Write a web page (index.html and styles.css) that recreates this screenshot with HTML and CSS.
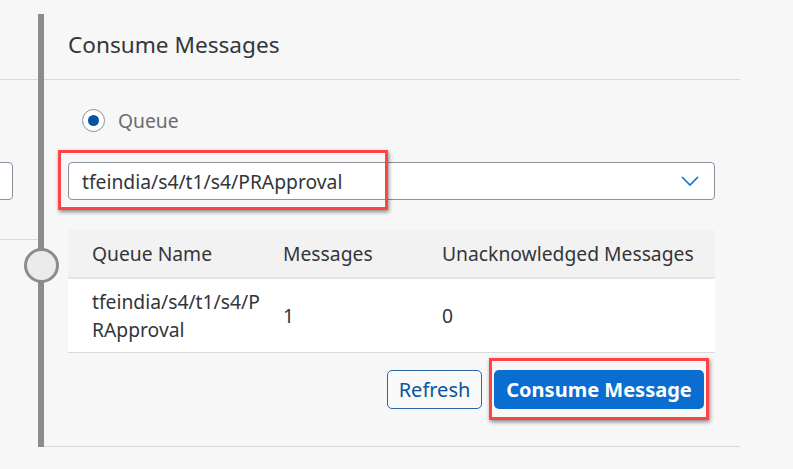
FILE: index.html
```html
<!DOCTYPE html>
<html lang="en">
<head>
<meta charset="utf-8">
<title>Consume Messages</title>
<link rel="stylesheet" href="styles.css">
</head>
<body>
<div class="page">
  <aside class="side">
    <div class="side-head"></div>
    <div class="side-body">
      <div class="side-input"></div>
    </div>
  </aside>
  <div class="rail"><span class="rail-node"></span></div>
  <section class="panel">
    <h2 class="panel-title">Consume Messages</h2>
    <div class="panel-body">
      <label class="radio">
        <span class="radio-ring"><span class="radio-dot"></span></span>
        <span class="radio-label">Queue</span>
      </label>
      <div class="select">
        <span class="select-value">tfeindia/s4/t1/s4/PRApproval</span>
        <svg class="chevron" width="18" height="10" viewBox="0 0 18 10"><path d="M1 1 L9 9 L17 1" fill="none" stroke="#0a6ed1" stroke-width="1.6"/></svg>
        <span class="mark mark-select"></span>
      </div>
      <div class="table">
        <div class="row row-head">
          <div class="cell c1">Queue Name</div>
          <div class="cell">Messages</div>
          <div class="cell">Unacknowledged Messages</div>
        </div>
        <div class="row row-body">
          <div class="cell c1"><span class="wrap">tfeindia/s4/t1/s4/PRApproval</span></div>
          <div class="cell">1</div>
          <div class="cell">0</div>
        </div>
      </div>
      <div class="actions">
        <button class="btn btn-ghost">Refresh</button>
        <button class="btn btn-primary">Consume Message<span class="mark mark-btn"></span></button>
      </div>
    </div>
  </section>
</div>
</body>
</html>
```
FILE: styles.css
```css
* { box-sizing: border-box; }
html, body { margin: 0; padding: 0; }
body {
  background: #f7f7f7;
  font-family: "Noto Sans", "Open Sans", sans-serif;
  color: #32363a;
}
.page {
  display: flex;
  height: 469px;
}
.side {
  width: 38px;
  flex: none;
}
.side-head {
  height: 80px;
  border-bottom: 1px solid #d9d9d9;
}
.side-body {
  height: 160px;
  padding-top: 82px;
  border-bottom: 1px solid #d9d9d9;
}
.side-input {
  margin-left: -10px;
  width: 23px;
  height: 38px;
  background: #fff;
  border: 1px solid #89919a;
  border-radius: 4px;
}
.rail {
  flex: none;
  width: 6px;
  margin-top: 14px;
  height: 433px;
  background: #8c8c8c;
  position: relative;
}
.rail-node {
  position: absolute;
  left: -14.5px;
  top: 234px;
  width: 35px;
  height: 35px;
  border: 3px solid #8c8c8c;
  background: #ebebeb;
  border-radius: 50%;
}
.panel {
  flex: none;
  width: 696px;
  height: 447px;
  border-bottom: 1px solid #d9d9d9;
}
.panel-title {
  margin: 0;
  height: 80px;
  padding: 29px 0 0 24px;
  font-size: 22.6px;
  line-height: 32px;
  font-weight: 400;
  color: #32363a;
  border-bottom: 1px solid #d9d9d9;
}
.panel-body {
  padding: 0 25px 0 24px;
}
.radio {
  display: flex;
  align-items: center;
  gap: 13px;
  margin: 29px 0 0 14px;
  height: 23px;
}
.radio-ring {
  width: 23px;
  height: 23px;
  border: 1px solid #89919a;
  border-radius: 50%;
  background: #fff;
  display: flex;
  align-items: center;
  justify-content: center;
}
.radio-dot {
  width: 11px;
  height: 11px;
  border-radius: 50%;
  background: #0854a0;
}
.radio-label {
  font-size: 19.3px;
  color: #6a6d70;
}
.select {
  position: relative;
  margin-top: 30px;
  height: 38px;
  display: flex;
  align-items: center;
  padding: 0 15px 0 13px;
  background: #fff;
  border: 1px solid #89919a;
  border-radius: 4px;
  font-size: 19.3px;
  color: #32363a;
}
.chevron { margin-left: auto; }
.mark {
  position: absolute;
  border: 3px solid #ff4242;
  box-shadow: 1px 2px 4px rgba(0, 0, 0, 0.45);
  pointer-events: none;
}
.mark-select {
  left: -11px;
  top: -13px;
  width: 330px;
  height: 60px;
}
.table {
  margin-top: 30px;
  font-size: 19.3px;
  color: #32363a;
}
.row {
  display: grid;
  grid-template-columns: 191px 159px 1fr;
  align-items: center;
}
.row-head {
  height: 49px;
  background: #f2f2f2;
  border-bottom: 2px solid #e4e4e4;
}
.row-body {
  height: 74px;
  background: #fff;
  border-bottom: 1px solid #d9d9d9;
  line-height: 28px;
}
.cell { padding-left: 24px; }
.wrap {
  display: block;
  width: 174px;
  word-break: break-all;
}
.actions {
  display: flex;
  justify-content: flex-end;
  gap: 12px;
  margin: 17px 11px 0 0;
}
.btn {
  position: relative;
  height: 39px;
  border-radius: 5px;
  font-family: inherit;
  font-size: 20px;
  padding: 0;
  cursor: pointer;
}
.btn-ghost {
  width: 95px;
  background: #f9f9f9;
  border: 1px solid #2c64a6;
  color: #0854a0;
}
.btn-primary {
  width: 210px;
  background: #0a6ed1;
  border: none;
  color: #fff;
  font-weight: 700;
}
.mark-btn {
  left: -5px;
  right: -5px;
  top: -12px;
  bottom: -11px;
}
```
